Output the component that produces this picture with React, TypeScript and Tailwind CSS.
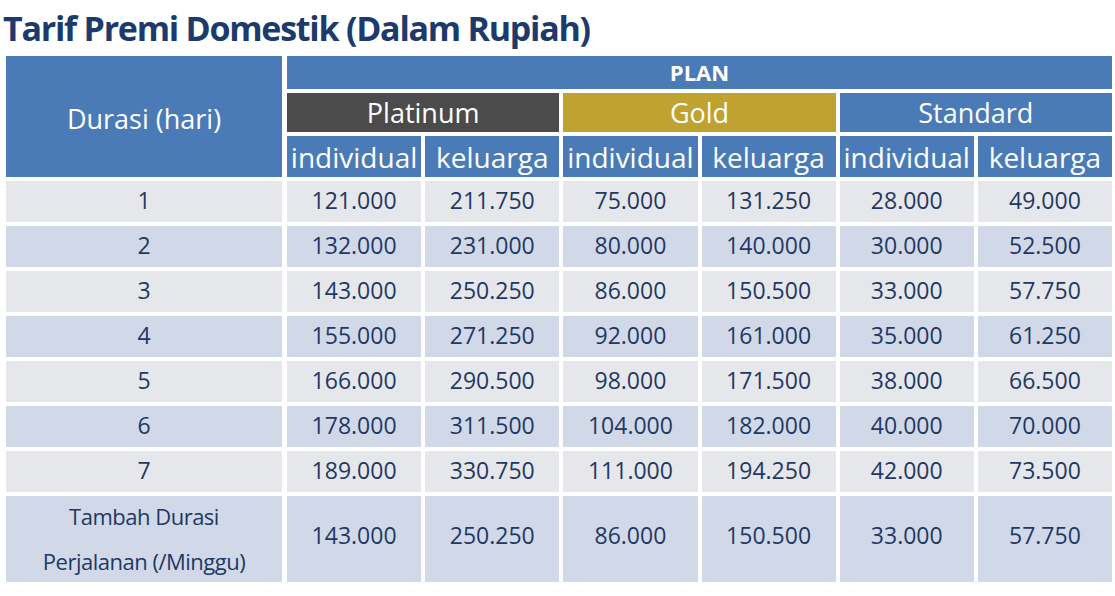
import React from "react";

type Row = { label: string; values: string[] };

const ROWS: Row[] = [
  { label: "1", values: ["121.000", "211.750", "75.000", "131.250", "28.000", "49.000"] },
  { label: "2", values: ["132.000", "231.000", "80.000", "140.000", "30.000", "52.500"] },
  { label: "3", values: ["143.000", "250.250", "86.000", "150.500", "33.000", "57.750"] },
  { label: "4", values: ["155.000", "271.250", "92.000", "161.000", "35.000", "61.250"] },
  { label: "5", values: ["166.000", "290.500", "98.000", "171.500", "38.000", "66.500"] },
  { label: "6", values: ["178.000", "311.500", "104.000", "182.000", "40.000", "70.000"] },
  { label: "7", values: ["189.000", "330.750", "111.000", "194.250", "42.000", "73.500"] },
];

const EXTRA = ["143.000", "250.250", "86.000", "150.500", "33.000", "57.750"];

const PLANS = [
  { name: "Platinum", bg: "bg-[#4b4b4b]" },
  { name: "Gold", bg: "bg-[#bfa22f]" },
  { name: "Standard", bg: "bg-[#4a7bb7]" },
];

export default function App() {
  return (
    <div className="w-[1115px] h-[596px] bg-white font-['Open_Sans',sans-serif] overflow-hidden">
      {/* judul */}
      <h1 className="pl-[3px] pt-[8px] h-[56px] text-[34px] leading-[40px] font-bold text-[#1c3a6b] tracking-[-1.25px] whitespace-nowrap">
        Tarif Premi Domestik (Dalam Rupiah)
      </h1>

      <div className="ml-[6px] w-[1106px] grid grid-cols-[277px_repeat(6,1fr)] grid-rows-[33px_39px_41px_repeat(7,41px)_86px] gap-x-[4px] gap-y-[4px]">
        {/* header kiri */}
        <div className="row-span-3 mr-[1px] bg-[#4a7bb7] text-white text-[27px] flex items-center justify-center pt-[6px]">
          Durasi (hari)
        </div>
        <div className="col-span-6 bg-[#4a7bb7] text-white text-[22px] font-bold flex items-center justify-center">
          PLAN
        </div>
        {PLANS.map((p) => (
          <div
            key={p.name}
            className={`col-span-2 ${p.bg} text-white text-[27px] flex items-center justify-center pt-[2px]`}
          >
            {p.name}
          </div>
        ))}
        {PLANS.map((p) => (
          <React.Fragment key={p.name + "-sub"}>
            <div className="bg-[#4a7bb7] text-white text-[28px] flex items-center justify-center whitespace-nowrap">
              individual
            </div>
            <div className="bg-[#4a7bb7] text-white text-[28px] flex items-center justify-center whitespace-nowrap">
              keluarga
            </div>
          </React.Fragment>
        ))}

        {/* baris data */}
        {ROWS.map((r, i) => {
          const bg = i % 2 === 0 ? "bg-[#e6e7eb]" : "bg-[#d1d9e8]";
          return (
            <React.Fragment key={r.label}>
              <div className={`${bg} mr-[1px] text-[#1f3864] text-[23px] flex items-center justify-center pb-[3px]`}>
                {r.label}
              </div>
              {r.values.map((v, j) => (
                <div key={j} className={`${bg} text-[#1f3864] text-[23px] flex items-center justify-center pb-[3px]`}>
                  {v}
                </div>
              ))}
            </React.Fragment>
          );
        })}

        {/* tambah durasi */}
        <div className="bg-[#d1d9e8] mr-[1px] text-[#1f3864] text-[22px] leading-[45px] tracking-[-0.5px] flex flex-col items-center justify-center">
          <span>Tambah Durasi</span>
          <span>Perjalanan (/Minggu)</span>
        </div>
        {EXTRA.map((v, j) => (
          <div key={j} className="bg-[#d1d9e8] text-[#1f3864] text-[23px] flex items-center justify-center pb-[8px]">
            {v}
          </div>
        ))}
      </div>
    </div>
  );
}
